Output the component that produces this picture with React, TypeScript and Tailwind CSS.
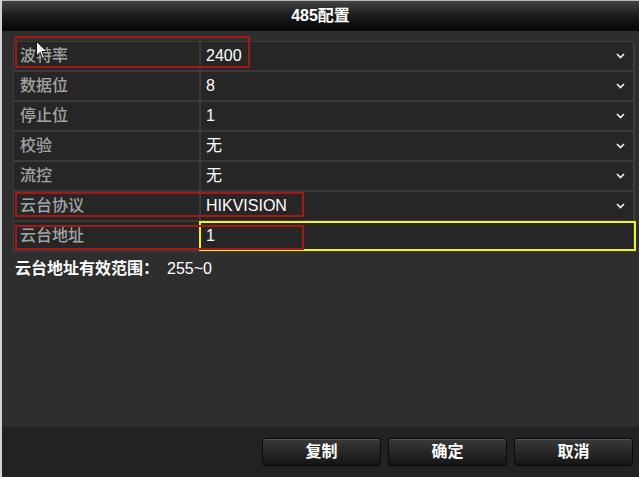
const rows = [
  { label: '波特率', value: '2400', select: true },
  { label: '数据位', value: '8', select: true },
  { label: '停止位', value: '1', select: true },
  { label: '校验', value: '无', select: true },
  { label: '流控', value: '无', select: true },
  { label: '云台协议', value: 'HIKVISION', select: true },
  { label: '云台地址', value: '1', select: false },
]

function Chevron() {
  return (
    <svg width="9" height="6" viewBox="0 0 9 6" className="shrink-0">
      <polyline points="1,1 4.5,4.5 8,1" fill="none" stroke="#f2f2f2" strokeWidth="1.6" />
    </svg>
  )
}

function Cursor() {
  return (
    <svg width="12" height="19" viewBox="0 0 12 19" className="absolute left-[34px] top-[41px] z-30">
      <path d="M0.5 0.5 L0.5 15 L4 11.5 L6.5 17.5 L8.5 16.5 L6 10.5 L11 10.5 Z" fill="#f4f4f4" stroke="#111" strokeWidth="1" />
    </svg>
  )
}

function RedMark({ className }: { className: string }) {
  return <div className={`pointer-events-none absolute z-20 border-2 border-solid border-[#a51818] ${className}`} />
}

export default function App() {
  return (
    <div
      className="relative flex h-[477px] w-[639px] flex-col overflow-hidden border-l-2 border-[#d4d4d4] bg-[#2e2e2e] text-[16px]"
      style={{ fontFamily: '"Liberation Sans", "Noto Sans CJK SC", sans-serif' }}
    >
      <div className="flex h-[31px] shrink-0 items-center justify-center border-t border-b border-t-[#b8b8b8] border-b-[#0c0c0c] bg-gradient-to-b from-[#444444] via-[#1c1c1c] to-[#060606] font-bold text-white">
        485配置
      </div>

      <div className="flex-1 pl-[11px] pt-[10px]">
        <div className="w-[622px] rounded-tr-[6px] border-t border-r-2 border-l border-[#3c3c3c] bg-[#262626]">
          {rows.map((row, i) => (
            <div key={row.label} className="flex h-[30px] border-b-2 border-[#3a3a3a]">
              <div className="flex w-[185px] items-center pl-[6px] font-medium text-[#a3a3a3]">{row.label}</div>
              <div className="relative flex flex-1 items-center border-l-2 border-[#3a3a3a] pl-[5px] pr-[8px] text-white">
                <span className="flex-1">{row.value}</span>
                {row.select ? <Chevron /> : null}
                {i === rows.length - 1 ? (
                  <div className="absolute -left-[2px] -top-[1px] z-10 h-[30px] w-[437px] border-2 border-[#f2f22a]" />
                ) : null}
              </div>
            </div>
          ))}
        </div>
        <div className="mt-[5px] pl-[2px] font-bold text-white">
          云台地址有效范围：<span className="ml-[8px] font-normal">255~0</span>
        </div>
      </div>

      <div className="flex h-[50px] shrink-0 items-start justify-end gap-[7px] bg-[#222222] pr-[6px] pt-[11px]">
        {['复制', '确定', '取消'].map((label) => (
          <button
            key={label}
            className="flex h-[28px] w-[119px] items-center justify-center rounded-[3px] border border-[#0a0a0a] bg-gradient-to-b from-[#3a3a3a] to-[#151515] font-bold text-white shadow-[inset_0_1px_0_#555]"
          >
            {label}
          </button>
        ))}
      </div>

      <RedMark className="left-[13px] top-[36px] h-[32px] w-[235px]" />
      <RedMark className="left-[13px] top-[192px] h-[25px] w-[289px]" />
      <RedMark className="left-[13px] top-[225px] h-[25px] w-[289px]" />
      <Cursor />
    </div>
  )
}
